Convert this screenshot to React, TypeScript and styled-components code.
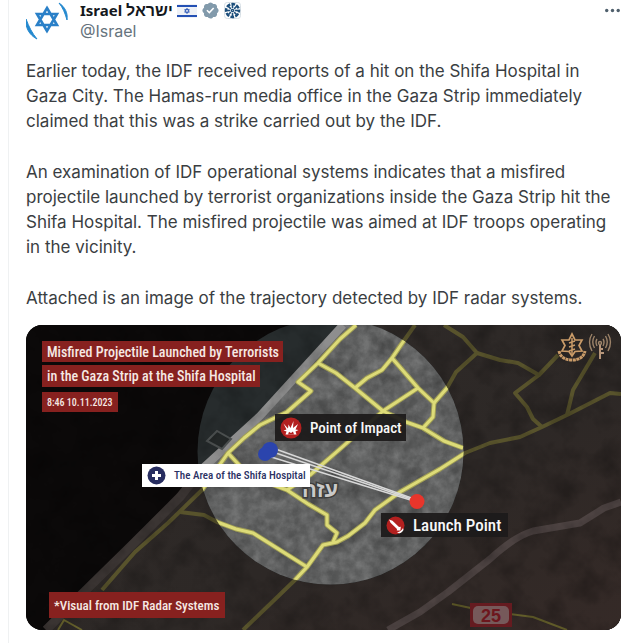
import React from "react";
import styled, { createGlobalStyle } from "styled-components";

const MAP_W = 595;
const MAP_H = 305;

const GlobalStyle = createGlobalStyle`
  *, *::before, *::after { box-sizing: border-box; }
  body {
    margin: 0;
    background: #fff;
    color: #3a3e42;
    font-family: Inter, Roboto, "Liberation Sans", sans-serif;
  }
`;

const Page = styled.main`
  margin-left: 8px;
  border-left: 1px solid #eff1f2;
  padding: 0 19px 13px 17px;
`;

const Header = styled.header`
  display: flex;
  align-items: flex-start;
  gap: 10px;
`;

const AvatarLink = styled.a`
  display: block;
  width: 44px;
  height: 42px;
  flex: none;
`;

const Identity = styled.div`
  flex: 1;
  min-width: 0;
  display: flex;
  flex-direction: column;
`;

const NameRow = styled.div`
  display: flex;
  align-items: center;
  gap: 4px;
  height: 21px;
`;

const Name = styled.a`
  color: #14181c;
  font-family: "Noto Sans", "Open Sans", "Liberation Sans", sans-serif;
  font-size: 15px;
  font-weight: 700;
  line-height: 20px;
  text-decoration: none;
  white-space: nowrap;
`;

const HebrewName = styled.span`
  font-family: "Liberation Sans", sans-serif;
  font-size: 16px;
`;

const Handle = styled.a`
  color: #66737d;
  font-size: 16px;
  line-height: 21px;
  text-decoration: none;
`;

const MoreButton = styled.button`
  display: flex;
  border: 0;
  padding: 8px 0;
  background: none;
  cursor: pointer;
`;

const Body = styled.div`
  display: flex;
  flex-direction: column;
  gap: 26px;
  margin-top: 17px;
  font-size: 17px;
  line-height: 25px;
`;

const Paragraph = styled.p`
  margin: 0;
`;

const MapFigure = styled.figure`
  position: relative;
  margin: 14px 0 0;
  aspect-ratio: ${MAP_W} / ${MAP_H};
  border-radius: 16px;
  overflow: hidden;
  background: #0b0909;
`;

const MapDrawing = styled.svg`
  display: block;
  width: 100%;
  height: 100%;
`;

type Tone = "red" | "dark" | "light";

const tones: Record<Tone, { bg: string; fg: string }> = {
  red: { bg: "#87211f", fg: "#f6e9e4" },
  dark: { bg: "rgba(29, 27, 27, 0.94)", fg: "#f7f7f7" },
  light: { bg: "#ffffff", fg: "#2b3163" },
};

const MapLabel = styled.span<{ $x: number; $y: number; $tone: Tone; $w: number; $h: number; $size: number }>`
  position: absolute;
  left: ${(p) => (p.$x / MAP_W) * 100}%;
  top: ${(p) => (p.$y / MAP_H) * 100}%;
  display: flex;
  align-items: center;
  gap: 8px;
  min-width: ${(p) => p.$w}px;
  height: ${(p) => p.$h}px;
  padding: 0 4px 0 5px;
  background: ${(p) => tones[p.$tone].bg};
  color: ${(p) => tones[p.$tone].fg};
  font-family: "Roboto Condensed", "Liberation Sans Narrow", Roboto, sans-serif;
  font-size: ${(p) => p.$size}px;
  font-weight: 500;
  white-space: nowrap;
`;

const LabelIcon = styled.svg`
  flex: none;
`;

const STAR = "M22 8 L32 25 H12 Z M22 31 L12 14 H32 Z";

const Avatar = () => (
  <svg width="44" height="42" viewBox="1 0 44 42" aria-hidden="true">
    <path d={STAR} fill="none" stroke="#2a80c8" strokeWidth="2.6" strokeLinejoin="miter" />
    <path d="M1 19 C0 27 4 35 12 39 C7 33 4 27 1 19Z" fill="#2489cf" stroke="#2489cf" />
    <path d="M34 3 C40 7 43 13 42 20 C40 13 38 8 34 3Z" fill="#2489cf" stroke="#2489cf" />
  </svg>
);

const Flag = () => (
  <svg width="20" height="14" viewBox="0 0 20 14" aria-label="Flag of Israel">
    <rect width="20" height="14" rx="1" fill="#eef1f6" />
    <path d="M0 1h20v2H0zM0 11h20v2H0z" fill="#2450b4" />
    <path d="M10 4.2 L12.3 8.2 H7.7Z M10 9.6 L7.7 5.6 H12.3Z" fill="none" stroke="#2450b4" strokeWidth=".8" />
  </svg>
);

const Verified = () => (
  <svg width="19" height="19" viewBox="0 0 22 22" aria-label="Verified account">
    <path
      fill="#829aab"
      d="M20.396 11c-.018-.646-.215-1.275-.57-1.816-.354-.54-.852-.972-1.438-1.246.223-.607.27-1.264.14-1.897-.131-.634-.437-1.218-.882-1.687-.47-.445-1.053-.75-1.687-.882-.633-.13-1.29-.083-1.897.14-.273-.587-.704-1.086-1.245-1.44S11.647 1.62 11 1.604c-.646.017-1.273.213-1.813.568s-.969.854-1.24 1.44c-.608-.223-1.267-.272-1.902-.14-.635.13-1.22.436-1.69.882-.445.47-.749 1.055-.878 1.688-.13.633-.08 1.29.144 1.896-.587.274-1.087.705-1.443 1.245-.356.54-.555 1.17-.574 1.817.02.647.218 1.276.574 1.817.356.54.856.972 1.443 1.245-.224.606-.274 1.263-.144 1.896.13.634.433 1.218.877 1.688.47.443 1.054.747 1.687.878.633.132 1.29.084 1.897-.136.274.586.705 1.084 1.246 1.439.54.354 1.17.551 1.816.569.647-.016 1.276-.213 1.817-.567s.972-.854 1.245-1.44c.604.239 1.266.296 1.903.164.636-.132 1.22-.447 1.68-.907.46-.46.776-1.044.908-1.681s.075-1.299-.165-1.903c.586-.274 1.084-.705 1.439-1.246.354-.54.551-1.17.569-1.816zM9.662 14.85l-3.429-3.428 1.293-1.302 2.072 2.072 4.4-4.794 1.347 1.246z"
    />
  </svg>
);

const Affiliation = () => (
  <svg width="17" height="17" viewBox="0 0 18 18" aria-label="Affiliated organisation">
    <rect x=".5" y=".5" width="17" height="17" rx="3" fill="#fff" stroke="#d5dde3" />
    <g stroke="#1d4f7c" fill="none">
      <circle cx="9" cy="9" r="6.8" strokeWidth="2.6" strokeDasharray="4 1.34" strokeDashoffset="2" />
      <circle cx="9" cy="9" r="1.2" strokeWidth="1.4" />
      {[0, 45, 90, 135, 180, 225, 270, 315].map((a) => (
        <path key={a} d="M9 6.5 V3" strokeWidth="1.7" transform={`rotate(${a} 9 9)`} />
      ))}
    </g>
  </svg>
);

const More = () => (
  <svg width="16" height="5" viewBox="0 0 16 5" aria-hidden="true">
    <g fill="#4f5f6c">
      <circle cx="1.7" cy="2.5" r="1.7" />
      <circle cx="7.5" cy="2.5" r="1.7" />
      <circle cx="13.2" cy="2.5" r="1.7" />
    </g>
  </svg>
);

const ImpactIcon = () => (
  <LabelIcon width="22" height="22" viewBox="0 0 22 22" aria-hidden="true">
    <circle cx="11" cy="11" r="10.5" fill="#b3201f" />
    <path d="M3.500 6.500 L8 11.500 L8.500 7.500 L10.500 11 L13.500 4 L13 11 L18 7 L15.500 12.500 L18.500 13 L15.500 14.500 L16.500 17.500 L5.500 17.500 L6.500 14.500 L3.500 13.500 L6.500 12.500Z" fill="#fff" />
    <path d="M8 17.5 L9 14.8 L11 16 L13 14.5 L14 17.5Z" fill="#b3201f" />
  </LabelIcon>
);

const LaunchIcon = () => (
  <LabelIcon width="19" height="19" viewBox="0 0 19 19" aria-hidden="true">
    <circle cx="9.5" cy="9.5" r="9" fill="#b3201f" />
    <path d="M3 3.5 L6.5 4.8 L13 11 L14.8 10.8 L14.4 14.6 L10.8 14.4 L11 13 L4.5 6.8Z" fill="#fff" />
    <path d="M11 16.5 C14 16 16 14 17 12 L17.5 14 C16 17 13.5 18 11 16.5Z" fill="#fff" />
  </LabelIcon>
);

const HospitalIcon = () => (
  <LabelIcon width="19" height="19" viewBox="0 0 19 19" aria-hidden="true">
    <circle cx="9.5" cy="9.5" r="9" fill="#272d60" />
    <path d="M8 5h3v3h3v3h-3v3H8v-3H5V8h3z" fill="#fff" />
  </LabelIcon>
);

const ROADS = [
  "M356 325 L340 339 L318 363 L298 382 L311 391 L287 412 L260 425 L244 438 L228 453 L202 490 L168 523 L135 552 L102 590",
  "M318 363 L336 373 L355 388 L383 411 L406 422 L423 428 L444 441 L463 448",
  "M355 388 L367 378 L382 370 L392 358 L403 342 L415 325",
  "M392 358 L418 388 L434 403 L433 417 L423 428",
  "M418 388 L383 411 L348 442 L310 475 L287 490",
  "M434 403 L447 388 L456 372 L477 353 L463 337 L444 325",
  "M477 353 L500 360 L518 363 L539 375 L558 355",
  "M539 375 L515 393 L527 407 L533 419 L542 427",
  "M621 394 L610 393 L567 415 L542 427 L520 437 L490 443 L465 453 L440 469 L400 492 L375 510 L365 523 L348 536 L337 542 L323 545 L307 567 L295 580 L268 606 L243 630",
  "M567 415 L573 390 L595 353",
  "M307 567 L253 533 L236 529 L217 522 L204 515 L180 512",
  "M228 453 L240 466 L260 480 L287 490 L308 504 L327 515 L327 525 L337 533 L333 542",
];

const FARM_ROADS = ["M452 604 L480 610 L533 617 L567 630", "M58 630 L64 620 L82 630"];

const HIGHWAY = "M388 630 L420 612 L448 592 L490 559 Q515 536 533 531 L580 523 L604 508 L621 502";

const COAST = "M343 325 L260 416 L203 468 L180 497 L134 543 L83 593 L46 630";

const Paths = ({ items }: { items: string[] }) => (
  <>
    {items.map((d) => (
      <path key={d} d={d} />
    ))}
  </>
);

const Terrain = () => (
  <MapDrawing viewBox="26 325 595 305" preserveAspectRatio="xMidYMid slice" role="img" aria-label="Radar trajectory over Gaza City">
    <defs>
      <clipPath id="spot">
        <circle cx="330.5" cy="451.5" r="133" />
      </clipPath>
      <clipPath id="shore">
        <path d={`${COAST} H621 V325Z`} />
      </clipPath>
      <filter id="ground" x="0" y="0" width="100%" height="100%">
        <feTurbulence type="fractalNoise" baseFrequency="0.1" numOctaves="4" seed="8" />
        <feColorMatrix values="0 0 0 0 1  0 0 0 0 1  0 0 0 0 1  1.4 0 0 0 -0.4" />
      </filter>
      <filter id="shade" x="0" y="0" width="100%" height="100%">
        <feTurbulence type="fractalNoise" baseFrequency="0.04" numOctaves="4" seed="21" />
        <feColorMatrix values="0 0 0 0 0  0 0 0 0 0  0 0 0 0 0  2 0 0 0 -0.8" />
      </filter>
      <linearGradient id="land" x1="0" y1="0" x2="1" y2="1">
        <stop offset="0" stopColor="#2f2b29" />
        <stop offset="0.6" stopColor="#2d2826" />
        <stop offset="1" stopColor="#352a27" />
      </linearGradient>
    </defs>

    <rect x="26" y="325" width="595" height="305" fill="#0b0909" />
    <path d={`${COAST} H621 V325Z`} fill="url(#land)" />
    <path d={COAST} fill="none" stroke="#3b3533" strokeWidth="9" />
    <g fill="none" strokeLinejoin="round">
      <path d={HIGHWAY} stroke="#4d4342" strokeWidth="7" />
      <g stroke="#58532c" strokeWidth="4">
        <Paths items={ROADS} />
      </g>
      <g stroke="#66612c" strokeWidth="2">
        <Paths items={FARM_ROADS} />
      </g>
    </g>

    <g clipPath="url(#spot)">
      <rect x="197" y="318" width="267" height="267" fill="#272c2d" />
      <path d={`${COAST} H470 V325Z`} fill="#5b5c5c" />
      <g clipPath="url(#shore)">
        <rect x="197" y="318" width="267" height="267" filter="url(#ground)" opacity="0.22" />
      </g>
      <path d={COAST} fill="none" stroke="#8e8e8e" strokeWidth="8" />
      <path d="M207 441 L217 431 L231 439 L222 449Z" fill="#232727" stroke="#4c5050" strokeWidth="2" />
    </g>
    <rect x="26" y="325" width="595" height="305" filter="url(#shade)" opacity="0.25" />
    <g clipPath="url(#spot)" fill="none" strokeLinejoin="round">
      <g stroke="#a09e54" strokeWidth="5">
        <Paths items={ROADS} />
      </g>
      <g stroke="#dddb78" strokeWidth="3">
        <Paths items={ROADS} />
      </g>
    </g>

    <g>
      <rect x="470" y="603" width="42" height="24" fill="#651b20" />
      <rect x="473" y="606" width="36" height="18" rx="5" fill="#76595a" />
      <text x="491" y="622" textAnchor="middle" fontFamily="Liberation Sans" fontWeight="700" fontSize="18" fill="#6d161d">
        25
      </text>
    </g>

    <text x="320" y="497" textAnchor="middle" fontFamily="Liberation Sans, sans-serif" fontWeight="700" fontSize="22" fill="#c9c9c9" stroke="#3d3d3d" strokeWidth="3" paintOrder="stroke">
      עזה
    </text>

    <g stroke="#d8d8d8" fill="none" strokeWidth="1.5">
      <path d="M270 447 L417 500" />
      <path d="M270 451 L417 501" />
      <path d="M268 456 L417 502" />
    </g>
    <g fill="#2b44ad">
      <circle cx="270" cy="450" r="8" />
      <circle cx="265" cy="454" r="7" />
    </g>
    <circle cx="417" cy="501.5" r="7.5" fill="#e8352b" />

    <g stroke="#c99b68" fill="none" strokeWidth="1.7">
      <path d="M572 334 L575 340 L582 340 L579 345.5 L582 351 L575 351.5 L572 356 L569 351.5 L562 351 L565 345.5 L562 340 L569 340Z" />
      <path d="M572 338 V355 M569 343 L575 341 M569 347 L575 345 M569 351 L575 349" strokeWidth="1.5" />
      <path d="M559 351 Q561 360 572 360 Q583 360 585 351" strokeWidth="3" strokeDasharray="3 .6" />
    </g>
    <g stroke="#9c8369" fill="none" strokeWidth="1.4">
      <path d="M600 345 V359 M600 349 H603 M600 353 H604" stroke="#b7967a" strokeWidth="2" />
      <path d="M597 339 Q595 342 597 346 M594.5 336 Q591 342 594.5 348 M592 334 Q587 342 592 351" />
      <path d="M603 339 Q605 342 603 346 M605.5 336 Q609 342 605.5 348 M608 334 Q613 342 608 351" />
      <circle cx="600" cy="343" r="1.5" />
    </g>
  </MapDrawing>
);

export default function App() {
  return (
    <>
      <GlobalStyle />
      <Page>
        <article>
          <Header>
            <AvatarLink href="#israel" aria-label="Israel">
              <Avatar />
            </AvatarLink>
            <Identity>
              <NameRow>
                <Name href="#israel">
                  Israel <HebrewName lang="he">ישראל</HebrewName>
                </Name>
                <Flag />
                <Verified />
                <Affiliation />
              </NameRow>
              <Handle href="#israel">@Israel</Handle>
            </Identity>
            <MoreButton type="button" aria-label="More">
              <More />
            </MoreButton>
          </Header>
          <Body>
            <Paragraph>
              Earlier today, the IDF received reports of a hit on the Shifa Hospital in Gaza City. The Hamas-run media
              office in the Gaza Strip immediately claimed that this was a strike carried out by the IDF.
            </Paragraph>
            <Paragraph>
              An examination of IDF operational systems indicates that a misfired projectile launched by terrorist
              organizations inside the Gaza Strip hit the Shifa Hospital. The misfired projectile was aimed at IDF
              troops operating in the vicinity.
            </Paragraph>
            <Paragraph>Attached is an image of the trajectory detected by IDF radar systems.</Paragraph>
          </Body>
          <MapFigure>
            <Terrain />
            <MapLabel $x={16} $y={16} $w={239} $h={21} $size={14} $tone="red">
              Misfired Projectile Launched by Terrorists
            </MapLabel>
            <MapLabel $x={16} $y={40} $w={216} $h={22} $size={14} $tone="red">
              in the Gaza Strip at the Shifa Hospital
            </MapLabel>
            <MapLabel $x={16} $y={67} $w={76} $h={20} $size={10} $tone="red">
              8:46 10.11.2023
            </MapLabel>
            <MapLabel $x={249} $y={89} $w={129} $h={27} $size={15} $tone="dark">
              <ImpactIcon />
              Point of Impact
            </MapLabel>
            <MapLabel $x={116} $y={139} $w={166} $h={23} $size={11} $tone="light">
              <HospitalIcon />
              The Area of the Shifa Hospital
            </MapLabel>
            <MapLabel $x={355} $y={188} $w={127} $h={24} $size={17} $tone="dark">
              <LaunchIcon />
              Launch Point
            </MapLabel>
            <MapLabel $x={23} $y={267} $w={176} $h={26} $size={13} $tone="red">
              *Visual from IDF Radar Systems
            </MapLabel>
          </MapFigure>
        </article>
      </Page>
    </>
  );
}
